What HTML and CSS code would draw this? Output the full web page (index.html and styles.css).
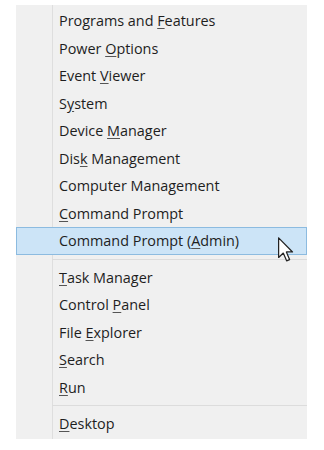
FILE: index.html
```html
<!DOCTYPE html>
<html lang="en">
<head>
    <meta charset="UTF-8">
    <title>Quick Link Menu</title>
    <link rel="stylesheet" href="styles.css">
</head>
<body>

    <div class="menu">
        <div class="item">Programs and <u>F</u>eatures</div>
        <div class="item">Power <u>O</u>ptions</div>
        <div class="item">Event <u>V</u>iewer</div>
        <div class="item">S<u>y</u>stem</div>
        <div class="item">Device <u>M</u>anager</div>
        <div class="item">Dis<u>k</u> Management</div>
        <div class="item">Computer Mana<u>g</u>ement</div>
        <div class="item"><u>C</u>ommand Prompt</div>
        <div class="item active">Command Prompt (<u>A</u>dmin)
            <svg class="cursor" width="16" height="25" viewBox="0 0 13 20">
                <path d="M0.5 0.5 L0.5 16.5 L4.3 12.9 L7 19.2 L9.4 18.2 L6.8 12 L11.8 12 Z"
                      fill="#fff" stroke="#222" stroke-width="1" stroke-linejoin="round"/>
            </svg>
        </div>
        <div class="separator"></div>
        <div class="item"><u>T</u>ask Manager</div>
        <div class="item">Control <u>P</u>anel</div>
        <div class="item">File <u>E</u>xplorer</div>
        <div class="item"><u>S</u>earch</div>
        <div class="item"><u>R</u>un</div>
        <div class="separator"></div>
        <div class="item"><u>D</u>esktop</div>
    </div>

</body>
</html>
```

FILE: styles.css
```css
/* Reset */
body {
    margin: 0;
    background: #fff;
    font-family: 'Open Sans', 'Noto Sans', sans-serif;
    color: #1e1e1e;
}

/* Menu panel */
.menu {
    width: 291px;
    margin: 5px 0 0 16px;
    padding: 2px 0 1px;
    background:
        linear-gradient(#dedede, #dedede) 36px 0 / 1px 100% no-repeat,
        #f0f0f0;
}

.item {
    position: relative;
    height: 27.5px;
    line-height: 27.5px;
    padding-left: 43px;
    font-size: 14.4px;
    white-space: nowrap;
    box-sizing: border-box;
}

.item u {
    text-decoration-color: #555;
    text-underline-offset: 2px;
}

/* Hovered row */
.active {
    background: #cce4f7;
    border: 1px solid #8cbbe0;
    line-height: 25.5px;
    padding-left: 42px;
}

.cursor {
    position: absolute;
    left: 261px;
    top: 9px;
}

.separator {
    height: 1px;
    margin: 4px 0 4px 36px;
    background: #dcdcdc;
}
```
